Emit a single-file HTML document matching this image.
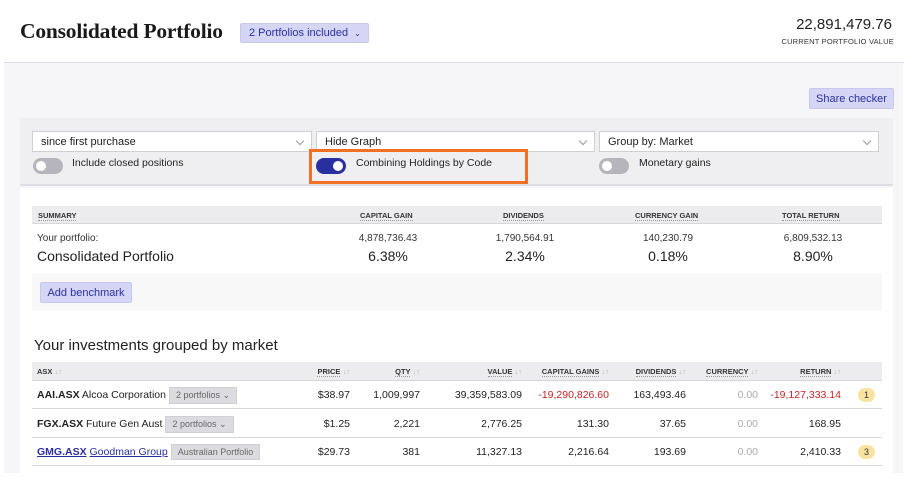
<!DOCTYPE html>
<html><head><style>
*{box-sizing:border-box;margin:0;padding:0}
body{width:921px;height:485px;background:#fff;font-family:"Liberation Sans",sans-serif;color:#222;position:relative;overflow:hidden}
.abs{position:absolute}
.title{left:20px;top:19px;font-family:"Liberation Serif",serif;font-size:21.5px;font-weight:bold;color:#1a1a1a;letter-spacing:-.2px}
.pill{left:240px;top:23px;width:129px;height:20px;background:#d5d6f6;border:1px solid #c6c8ef;border-radius:2px;color:#2a2fa0;font-size:11px;line-height:19px;padding-left:8px}
.val{right:29px;top:16px;font-size:15px;color:#222}
.vlab{right:27px;top:37px;font-size:7.5px;color:#333;letter-spacing:.2px}
.hline{left:4px;top:62px;width:900px;height:1px;background:#dcdce4}
.panel{left:4px;top:63px;width:899px;height:410px;background:#f6f6f8}
.share{left:809px;top:88px;width:85px;height:21px;background:#d5d6f6;border:1px solid #c6c8ef;border-radius:2px;color:#2a2fa0;font-size:11px;line-height:21px;text-align:center}
.bar{left:20px;top:118px;width:873px;height:68px;background:#efeff1;border-bottom:2px solid #dedee2}
.white{left:20px;top:188px;width:873px;height:285px;background:#fff}
.sel{height:21px;background:#fff;border:1px solid #d0d0d4;font-size:11px;line-height:21px;padding-left:8px;color:#222}
.sel:after{content:"";position:absolute;right:8px;top:6px;width:5px;height:5px;border-right:1px solid #999;border-bottom:1px solid #999;transform:rotate(45deg)}
.tog{width:30px;height:16px;border-radius:8px;background:#b5b5bb}
.tog i{position:absolute;top:3px;width:10px;height:10px;border-radius:5px;background:#fff}
.lab{font-size:10.5px;color:#222}
.shead{left:32px;top:206px;width:850px;height:18px;background:#ececef;border-bottom:1px solid #d6d6dc;font-size:7.5px;font-weight:bold;color:#333}
.shead span{position:absolute;top:5px;border-bottom:1px dotted #999}
.num{font-size:10px;color:#333}
.pct{font-size:14px;color:#222}
.bench{left:32px;top:273px;width:850px;height:38px;background:#f8f8f8}
.th{left:32px;top:362px;width:850px;height:19px;background:#ececef;border-bottom:1px solid #d6d6dc;font-size:7.5px;font-weight:bold;color:#333}
.th .h{position:absolute;top:5px;white-space:nowrap}
.th .h u{text-decoration:none;border-bottom:1px dotted #999}
.row{left:32px;width:850px;height:28px;border-bottom:1px solid #d8d8dc;font-size:10.5px}
.row .c{position:absolute;top:8px;text-align:right}
.tag{display:inline-block;background:#dcdce0;color:#666;font-size:9px;padding:2px 6px;margin-left:3px;border:1px solid #d0d0d4}
.badge{position:absolute;top:7px;left:826px;width:17px;height:14px;border-radius:7px;background:#f8e3a0;font-size:9px;text-align:center;line-height:14px;color:#333}
.red{color:#c62424}.gray{color:#aaa}
.ar{color:#bbb;font-weight:normal}
</style></head><body>
<div class="abs title">Consolidated Portfolio</div>
<div class="abs pill">2 Portfolios included &nbsp;<span style="font-size:8px">&#8964;</span></div>
<div class="abs val">22,891,479.76</div>
<div class="abs vlab">CURRENT PORTFOLIO VALUE</div>
<div class="abs hline"></div>
<div class="abs panel"></div>
<div class="abs share">Share checker</div>
<div class="abs bar"></div>
<div class="abs white"></div>
<div class="abs sel" style="left:32px;top:131px;width:280px">since first purchase</div>
<div class="abs sel" style="left:316px;top:131px;width:279px">Hide Graph</div>
<div class="abs sel" style="left:599px;top:131px;width:280px">Group by: Market</div>
<div class="abs tog" style="left:33px;top:158px"><i style="left:3px"></i></div>
<div class="abs lab" style="left:72px;top:157px">Include closed positions</div>
<div class="abs tog" style="left:316px;top:158px;background:#2a2fa0"><i style="left:17px"></i></div>
<div class="abs lab" style="left:356px;top:157px">Combining Holdings by Code</div>
<div class="abs" style="left:309px;top:149px;width:219px;height:35px;border:3px solid #f27022"></div>
<div class="abs tog" style="left:599px;top:158px"><i style="left:3px"></i></div>
<div class="abs lab" style="left:639px;top:157px">Monetary gains</div>

<div class="abs shead"><span style="left:6px">SUMMARY</span><span style="left:328px">CAPITAL GAIN</span><span style="left:471px">DIVIDENDS</span><span style="left:603px">CURRENCY GAIN</span><span style="left:750px">TOTAL RETURN</span></div>
<div class="abs num" style="left:37px;top:233px">Your portfolio:</div>
<div class="abs" style="left:37px;top:248px;font-size:14px">Consolidated Portfolio</div>
<div class="abs num" style="left:338px;top:233px;width:100px;text-align:center">4,878,736.43</div>
<div class="abs pct" style="left:338px;top:248px;width:100px;text-align:center">6.38%</div>
<div class="abs num" style="left:475px;top:233px;width:100px;text-align:center">1,790,564.91</div>
<div class="abs pct" style="left:475px;top:248px;width:100px;text-align:center">2.34%</div>
<div class="abs num" style="left:618px;top:233px;width:100px;text-align:center">140,230.79</div>
<div class="abs pct" style="left:618px;top:248px;width:100px;text-align:center">0.18%</div>
<div class="abs num" style="left:763px;top:233px;width:100px;text-align:center">6,809,532.13</div>
<div class="abs pct" style="left:763px;top:248px;width:100px;text-align:center">8.90%</div>
<div class="abs bench"></div>
<div class="abs share" style="left:40px;top:282px;width:92px">Add benchmark</div>

<div class="abs" style="left:34px;top:337px;font-size:15px;color:#222">Your investments grouped by market</div>
<div class="abs th">
<div class="h" style="left:5px">ASX <b class="ar">↓↑</b></div>
<div class="h" style="right:532px"><u>PRICE</u> <b class="ar">↓↑</b></div>
<div class="h" style="right:462px"><u>QTY</u> <b class="ar">↓↑</b></div>
<div class="h" style="right:360px"><u>VALUE</u> <b class="ar">↓↑</b></div>
<div class="h" style="right:273px"><u>CAPITAL GAINS</u> <b class="ar">↓↑</b></div>
<div class="h" style="right:196px"><u>DIVIDENDS</u> <b class="ar">↓↑</b></div>
<div class="h" style="right:124px"><u>CURRENCY</u> <b class="ar">↓↑</b></div>
<div class="h" style="right:41px"><u>RETURN</u> <b class="ar">↓↑</b></div>
</div>

<div class="abs row" style="top:381px"><div style="position:absolute;left:5px;top:6px"><b>AAI.ASX</b> Alcoa Corporation<span class="tag">2 portfolios &#8964;</span></div>
<div class="c" style="right:532px">$38.97</div><div class="c" style="right:462px">1,009,997</div><div class="c" style="right:360px">39,359,583.09</div><div class="c red" style="right:273px">-19,290,826.60</div><div class="c" style="right:196px">163,493.46</div><div class="c gray" style="right:124px">0.00</div><div class="c red" style="right:41px">-19,127,333.14</div><div class="badge">1</div></div>
<div class="abs row" style="top:410px"><div style="position:absolute;left:5px;top:6px"><b>FGX.ASX</b> Future Gen Aust<span class="tag">2 portfolios &#8964;</span></div>
<div class="c" style="right:532px">$1.25</div><div class="c" style="right:462px">2,221</div><div class="c" style="right:360px">2,776.25</div><div class="c" style="right:273px">131.30</div><div class="c" style="right:196px">37.65</div><div class="c gray" style="right:124px">0.00</div><div class="c" style="right:41px">168.95</div></div>
<div class="abs row" style="top:438px"><div style="position:absolute;left:5px;top:6px;color:#2a2fa0"><b style="text-decoration:underline">GMG.ASX</b> <u>Goodman Group</u><span class="tag">Australian Portfolio</span></div>
<div class="c" style="right:532px">$29.73</div><div class="c" style="right:462px">381</div><div class="c" style="right:360px">11,327.13</div><div class="c" style="right:273px">2,216.64</div><div class="c" style="right:196px">193.69</div><div class="c gray" style="right:124px">0.00</div><div class="c" style="right:41px">2,410.33</div><div class="badge">3</div></div>
</body></html>
